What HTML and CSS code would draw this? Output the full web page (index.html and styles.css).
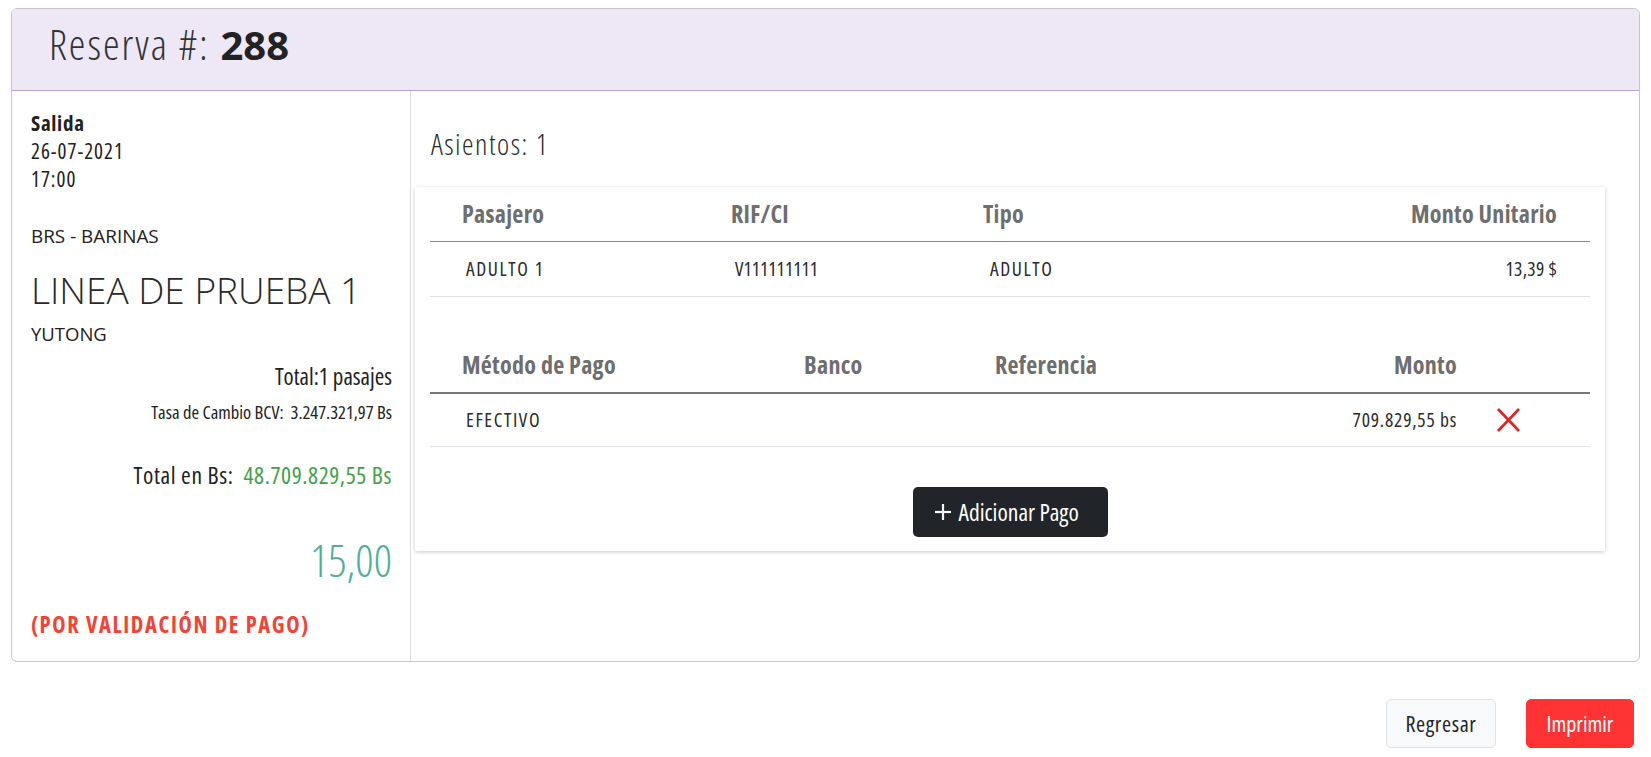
FILE: index.html
```html
<!DOCTYPE html>
<html lang="es">
<head>
<meta charset="utf-8">
<title>Reserva 288</title>
<link rel="stylesheet" href="styles.css">
</head>
<body>
<div class="page">
  <section class="card">
    <header class="card-head">
      <h1 class="title"><span class="title-lbl">Reserva #:</span> <b class="title-num">288</b></h1>
    </header>
    <div class="card-body">
      <aside class="info">
        <div class="salida">Salida</div>
        <div class="line">26-07-2021</div>
        <div class="line">17:00</div>
        <div class="route">BRS - BARINAS</div>
        <div class="linea">LINEA DE PRUEBA 1</div>
        <div class="bus">YUTONG</div>
        <div class="total-pas">Total:1 pasajes</div>
        <div class="tasa">Tasa de Cambio BCV:&nbsp; 3.247.321,97 Bs</div>
        <div class="total-bs">Total en Bs:&nbsp; <span class="green">48.709.829,55 Bs</span></div>
        <div class="usd">15,00</div>
        <div class="status">(POR VALIDACIÓN DE PAGO)</div>
      </aside>
      <main class="detail">
        <h2 class="seats">Asientos: 1</h2>
        <div class="panel">
          <div class="grid g1 thead">
            <div class="th">Pasajero</div>
            <div class="th">RIF/CI</div>
            <div class="th">Tipo</div>
            <div class="th right">Monto Unitario</div>
          </div>
          <div class="grid g1 trow">
            <div class="td caps">ADULTO 1</div>
            <div class="td">V111111111</div>
            <div class="td caps c3">ADULTO</div>
            <div class="td right num">13,39 $</div>
          </div>
          <div class="grid g2 thead thead2">
            <div class="th">Método de Pago</div>
            <div class="th">Banco</div>
            <div class="th">Referencia</div>
            <div class="th right">Monto</div>
            <div class="th"></div>
          </div>
          <div class="grid g2 trow trow2">
            <div class="td caps">EFECTIVO</div>
            <div class="td"></div>
            <div class="td"></div>
            <div class="td right num2">709.829,55 bs</div>
            <div class="td action">
              <svg class="x-icon" width="27" height="26" viewBox="0 0 27 26" aria-hidden="true">
                <line x1="3" y1="2" x2="24" y2="24" />
                <line x1="24" y1="2" x2="3" y2="24" />
              </svg>
            </div>
          </div>
          <div class="actions">
            <button class="btn btn-dark" type="button">
              <svg class="plus" width="16" height="16" viewBox="0 0 16 16" aria-hidden="true">
                <line x1="8" y1="0" x2="8" y2="16" />
                <line x1="0" y1="8" x2="16" y2="8" />
              </svg>
              <span>Adicionar Pago</span>
            </button>
          </div>
        </div>
      </main>
    </div>
  </section>
  <div class="footer">
    <button class="btn btn-light" type="button">Regresar</button>
    <button class="btn btn-red" type="button">Imprimir</button>
  </div>
</div>
</body>
</html>
```
FILE: styles.css
```css
* { box-sizing: border-box; }
html, body { margin: 0; padding: 0; background: #fff; }
body {
  font-family: "Open Sans", sans-serif;
  color: #212121;
  font-size: 20px;
}
.page { padding: 8px 11px 0; }

.card {
  border: 1px solid #c6c6c6;
  border-radius: 6px;
  overflow: hidden;
  background: #fff;
}
.card-head {
  background: #ede7f6;
  border-bottom: 1px solid #b7a2dd;
  height: 82px;
  padding: 11px 0 0 37px;
}
.title {
  margin: 0;
  font-size: 42px;
  line-height: 48px;
  font-weight: 300;
  color: #333;
}
.title-lbl { font-stretch: 75%; letter-spacing: 2px; }
.title-num { font-weight: 700; font-stretch: 100%; font-size: 40px; color: #222; }

.card-body {
  display: grid;
  grid-template-columns: 399px 1fr;
}

/* left column */
.info {
  border-right: 1px solid #dcdcdc;
  padding: 18px 18px 21px 19px;
}
.salida { font-weight: 700; font-size: 21px; line-height: 28px; font-stretch: 75%; letter-spacing: 0.7px; }
.line { font-size: 21px; line-height: 28px; font-stretch: 75%; letter-spacing: 1px; }
.route { margin-top: 29px; line-height: 28px; font-size: 18.9px; }
.linea {
  margin-top: 16px;
  font-size: 37px;
  line-height: 48px;
  font-weight: 300;
  color: #2a2a2a;
}
.bus { margin-top: 6px; line-height: 28px; font-size: 18.5px; }
.total-pas {
  margin-top: 14px;
  text-align: right;
  font-size: 23px;
  line-height: 28px;
  font-stretch: 75%;
}
.tasa {
  margin-top: 10px;
  text-align: right;
  font-size: 18.5px;
  line-height: 24px;
  font-stretch: 75%;
}
.total-bs {
  margin-top: 35px;
  text-align: right;
  font-size: 23.5px;
  line-height: 32px;
  font-stretch: 75%;
  letter-spacing: 0.6px;
}
.green { color: #43a047; }
.usd {
  margin-top: 40px;
  text-align: right;
  font-size: 45px;
  line-height: 58px;
  font-weight: 300;
  font-stretch: 75%;
  color: #4fae9c;
}
.status {
  margin-top: 21px;
  font-size: 22.5px;
  line-height: 30px;
  font-weight: 700;
  font-stretch: 75%;
  letter-spacing: 1.6px;
  color: #f44336;
}

/* right column */
.detail { padding: 35px 34px 0 4px; }
.seats {
  margin: 0 0 25px;
  padding-left: 16px;
  font-size: 29px;
  line-height: 36px;
  font-weight: 300;
  font-stretch: 75%;
  letter-spacing: 1.5px;
  color: #2a2a2a;
}
.panel {
  background: #fff;
  box-shadow: 0 1px 4px rgba(0, 0, 0, 0.22);
  padding: 0 15px 14px;
}
.grid { display: grid; align-items: center; }
.g1 { grid-template-columns: 269px 252px 1fr 1fr; }
.g2 { grid-template-columns: 342px 191px 263px 264px 100px; }
.thead { height: 55px; border-bottom: 1px solid #8a8a8a; }
.thead2 { margin-top: 41px; height: 56px; border-bottom: 2px solid #777; }
.trow { height: 55px; border-bottom: 1px solid #dee2e6; }
.trow2 { height: 53px; }
.th {
  padding: 0 33px 0 32px;
  font-size: 24px;
  line-height: 28px;
  font-weight: 700;
  font-stretch: 75%;
  letter-spacing: 0.3px;
  color: #6e6e6e;
}
.td {
  padding: 0 33px 0 36px;
  font-size: 19.5px;
  line-height: 26px;
  font-stretch: 75%;
  color: #2b2b2b;
}
.td.caps { letter-spacing: 1.6px; }
.td.c3 { padding-left: 39px; }
.td.num { letter-spacing: 0.3px; }
.td.num2 { letter-spacing: 0.8px; }
.right { text-align: right; }
.td.action { padding: 0 0 0 5px; display: flex; align-items: center; }
.x-icon line { stroke: #e3211d; stroke-width: 2.6; }

.actions {
  margin-top: 40px;
  display: flex;
  justify-content: center;
}
.btn {
  font-family: "Open Sans", sans-serif;
  border-radius: 5px;
  cursor: pointer;
}
.btn-dark {
  width: 195px;
  height: 50px;
  display: flex;
  align-items: center;
  gap: 8px;
  padding: 0 0 0 22px;
  background: #212529;
  border: 0;
  color: #fff;
  font-size: 23.5px;
  font-stretch: 75%;
}
.plus line { stroke: #fff; stroke-width: 2.2; }

.footer {
  display: flex;
  justify-content: flex-end;
  gap: 30px;
  margin-top: 37px;
  padding-right: 6px;
}
.btn-light, .btn-red {
  height: 49px;
  padding: 0;
  font-size: 22px;
  line-height: 27px;
  font-stretch: 75%;
}
.btn-light {
  width: 110px;
  background: #f8f9fa;
  border: 1px solid #dfe2e6;
  color: #212529;
  letter-spacing: 0.6px;
}
.btn-red {
  width: 108px;
  background: #ff3333;
  border: 1px solid #ff3333;
  color: #fff;
}
```
